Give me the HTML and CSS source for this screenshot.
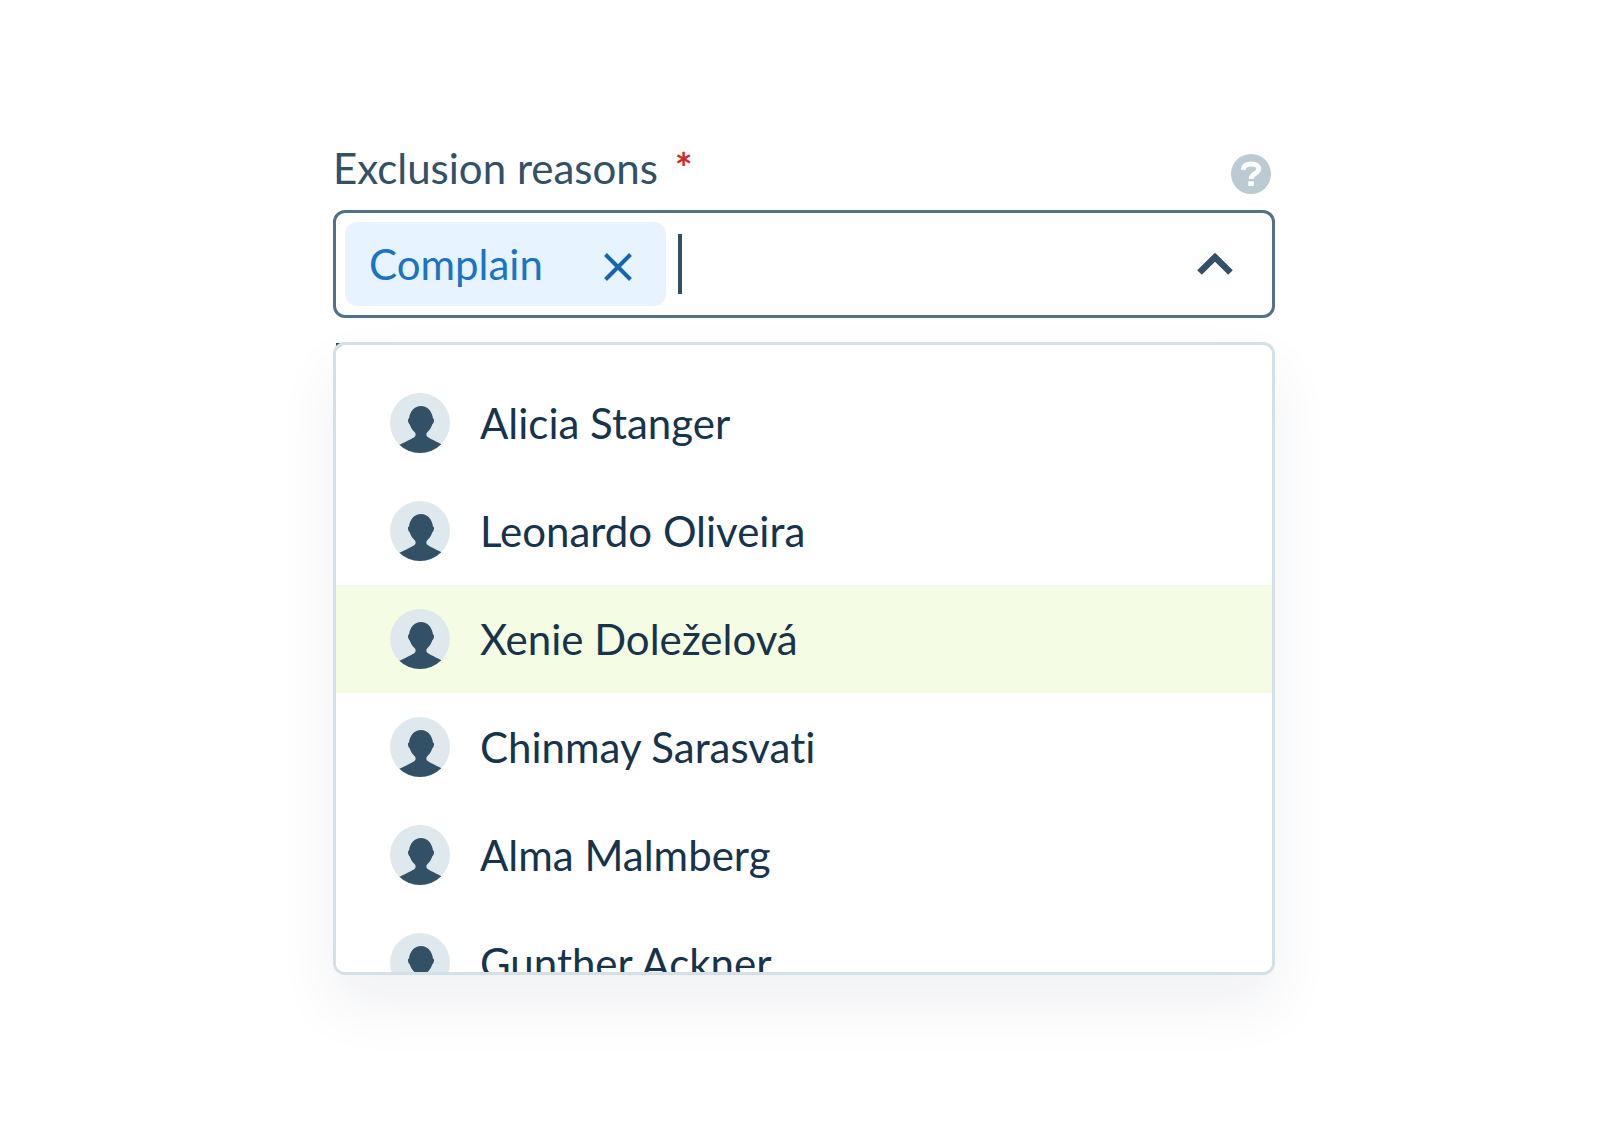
FILE: index.html
```
<!DOCTYPE html>
<html lang="en">
<head>
<meta charset="utf-8">
<meta name="viewport" content="width=device-width, initial-scale=1">
<title>Exclusion reasons</title>
<link rel="stylesheet" href="styles.css">
</head>
<body>
<svg class="sprite" aria-hidden="true">
  <symbol id="avatar" viewBox="0 0 60 60">
    <clipPath id="disc"><circle cx="30" cy="30" r="30"/></clipPath>
    <circle cx="30" cy="30" r="30" fill="#dfe8ed"/>
    <path clip-path="url(#disc)" fill="#325167" d="M31 13c6.500 0 11 5 12 12.500 1 .3 1.200 1.500 1 2.500-.3 1.500-.8 2.500-1.800 3.500-1 3.500-3.200 6.300-5.200 8-.8 1-.9 3 0 4 1.500 1.400 7.500 4.300 14 7.500V62H9V52c7-3.500 14.500-6.800 16-8.500.8-1 .8-3 0-4-2-1.700-4.200-4.500-5.200-8-1-1-1.500-2-1.800-3.500-.2-1 0-2.200 1-2.500 1-7.500 5.500-12.500 12-12.500z"/>
  </symbol>
</svg>
<main class="picker">
  <div class="picker-head">
    <label class="picker-label" for="reasons">Exclusion reasons <span class="required">*</span></label>
    <button class="help" type="button" aria-label="Help">
      <svg viewBox="0 0 40 40" aria-hidden="true">
        <circle cx="20" cy="20" r="20" fill="#bccad3"/>
        <path d="M12.300 15.800C12.600 11.400 15.600 10 20.200 10c4.600 0 7.600 1.800 7.600 5.100 0 4.700-7.700 3.900-7.700 10" fill="none" stroke="#fff" stroke-width="4.800"/>
        <path d="M17.200 27.300h5.600v4.700h-5.600z" fill="#fff"/>
      </svg>
    </button>
  </div>
  <div class="field">
    <span class="chip">Complain
      <button class="chip-remove" type="button" aria-label="Remove Complain">
        <svg viewBox="0 0 28 28" aria-hidden="true"><path d="M1.500 1.500l25 25M26.500 1.500l-25 25" stroke="#1565b0" stroke-width="4"/></svg>
      </button>
    </span>
    <span class="caret"></span>
    <input class="field-input" id="reasons" type="text" autocomplete="off">
    <button class="toggle" type="button" aria-label="Close the list">
      <svg viewBox="0 0 36 24" aria-hidden="true"><path d="M2.500 20.500L18 5.200l15.500 15.300" fill="none" stroke="#325167" stroke-width="6.500"/></svg>
    </button>
  </div>
  <div class="popup">
    <ul class="options" role="listbox" aria-label="Exclusion reasons">
      <li class="option" role="option"><svg class="avatar" aria-hidden="true"><use href="#avatar"/></svg>Alicia Stanger</li>
      <li class="option" role="option"><svg class="avatar" aria-hidden="true"><use href="#avatar"/></svg>Leonardo Oliveira</li>
      <li class="option option-active" role="option" aria-selected="true"><svg class="avatar" aria-hidden="true"><use href="#avatar"/></svg>Xenie Doleželová</li>
      <li class="option" role="option"><svg class="avatar" aria-hidden="true"><use href="#avatar"/></svg>Chinmay Sarasvati</li>
      <li class="option" role="option"><svg class="avatar" aria-hidden="true"><use href="#avatar"/></svg>Alma Malmberg</li>
      <li class="option" role="option"><svg class="avatar" aria-hidden="true"><use href="#avatar"/></svg>Gunther Ackner</li>
    </ul>
  </div>
</main>
</body>
</html>
```
FILE: styles.css
```
* { box-sizing: border-box; }

body {
  margin: 0;
  background: #fff;
  color: #17344d;
  font: 42px/48px Lato, "Liberation Sans", sans-serif;
  font-variant-ligatures: none;
}

button {
  padding: 0;
  border: 0;
  background: none;
  cursor: pointer;
}

svg { display: block; }

.sprite {
  position: absolute;
  width: 0;
  height: 0;
}

.picker {
  max-width: 990px;
  margin: 0 auto;
  padding: 144px 24px 96px;
}

.picker-head {
  display: flex;
  justify-content: space-between;
  padding-right: 4px;
  margin-bottom: 16px;
}

.picker-label { color: #325167; }

.required {
  margin-left: 6px;
  color: #d02b2b;
  font-weight: 700;
}

.help {
  width: 40px;
  height: 40px;
  margin-top: 10px;
}

.field {
  display: flex;
  align-items: center;
  height: 108px;
  padding: 0 39px 0 9px;
  border: 3px solid #537189;
  border-radius: 12px;
  background: #fff;
}

.chip {
  display: flex;
  align-items: center;
  gap: 61px;
  height: 84px;
  padding: 0 34px 0 24px;
  border-radius: 12px;
  background: #e7f4ff;
  color: #1a73c5;
}

.chip-remove {
  width: 28px;
  height: 28px;
  margin-top: 6px;
}

.caret {
  width: 4px;
  height: 60px;
  margin-left: 12px;
  background: #325167;
}

.field-input {
  flex: 1;
  min-width: 0;
  height: 60px;
  padding: 0;
  border: 0;
  outline: 0;
  background: none;
  color: #325167;
  font: inherit;
}

.toggle {
  width: 36px;
  height: 24px;
}

.popup {
  position: relative;
  margin-top: 24px;
  border-radius: 12px;
  box-shadow: 0 30px 60px rgba(23, 43, 90, 0.07);
}

.popup::before {
  content: "";
  position: absolute;
  top: 1px;
  left: 3px;
  width: 6px;
  height: 6px;
  background: #325167;
}

.options {
  position: relative;
  max-height: 633px;
  margin: 0;
  padding: 24px 0;
  overflow-y: auto;
  scrollbar-width: none;
  border: 3px solid #d4dfe6;
  border-radius: 12px;
  background: #fff;
  list-style: none;
}

.option {
  display: flex;
  align-items: center;
  gap: 30px;
  height: 108px;
  padding: 0 54px;
}

.option-active { background: #f4fce3; }

.avatar {
  flex: none;
  width: 60px;
  height: 60px;
}
```
